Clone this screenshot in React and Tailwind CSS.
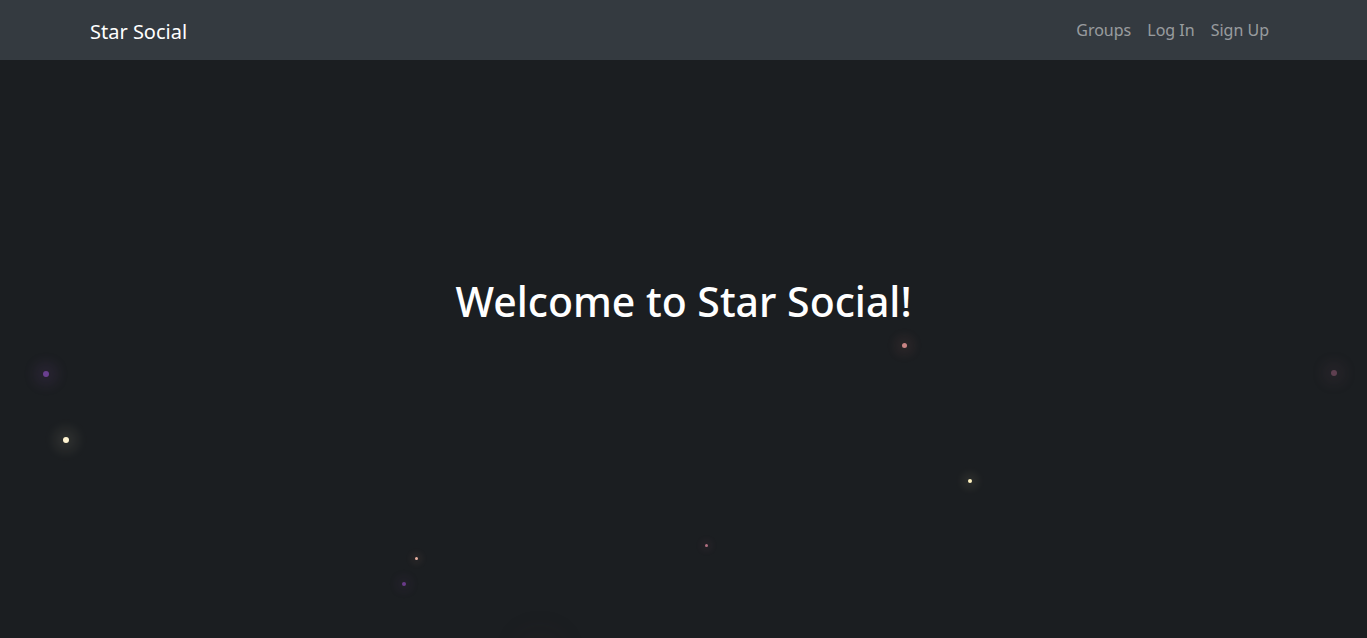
import React from 'react';

// stars on the background: position is the content itself
const stars = [
  { x: 46, y: 374, s: 6, c: '#6a3f8f', g: 'rgba(120,70,160,0.12)' },
  { x: 66, y: 440, s: 6, c: '#fff4d2', g: 'rgba(255,240,200,0.08)' },
  { x: 904, y: 345, s: 5, c: '#c98484', g: 'rgba(200,120,120,0.08)' },
  { x: 970, y: 481, s: 4, c: '#fff2c0', g: 'rgba(255,240,190,0.07)' },
  { x: 416, y: 558, s: 3, c: '#e8b0a0', g: 'rgba(230,170,150,0.06)' },
  { x: 404, y: 584, s: 4, c: '#6a3a8a', g: 'rgba(110,60,140,0.08)' },
  { x: 706, y: 545, s: 3, c: '#b07080', g: 'rgba(180,110,130,0.06)' },
  { x: 1334, y: 373, s: 6, c: '#5e3f50', g: 'rgba(120,80,100,0.1)' },
  { x: 540, y: 655, s: 12, c: 'rgba(60,35,40,0.3)', g: 'rgba(60,35,40,0.12)' },
];

const Star = ({ x, y, s, c, g }) => (
  <div
    className="absolute rounded-full"
    style={{
      left: x - s / 2,
      top: y - s / 2,
      width: s,
      height: s,
      background: c,
      boxShadow: `0 0 ${s * 2}px ${s * 1.5}px ${g}`,
    }}
  />
);

export default function App() {
  return (
    <div className="min-h-screen h-[638px] bg-[#1b1e21] font-['Noto_Sans','Open_Sans',sans-serif] flex flex-col overflow-hidden">
      <nav className="h-[60px] bg-[#343a40] flex items-center justify-between px-[90px] shrink-0">
        <a className="text-white text-[20px] leading-none pt-[4px]">Star Social</a>
        <div className="flex items-center">
          <a className="text-white/50 text-[16px] px-2">Groups</a>
          <a className="text-white/50 text-[16px] px-2">Log In</a>
          <a className="text-white/50 text-[16px] px-2">Sign Up</a>
        </div>
      </nav>
      <main className="relative flex-1">
        {stars.map((st, i) => (
          <Star key={i} {...st} y={st.y - 60} />
        ))}
        <h1 className="relative pt-[217px] text-center text-white text-[41px] leading-[1.2] font-medium">
          Welcome to Star Social!
        </h1>
      </main>
    </div>
  );
}
